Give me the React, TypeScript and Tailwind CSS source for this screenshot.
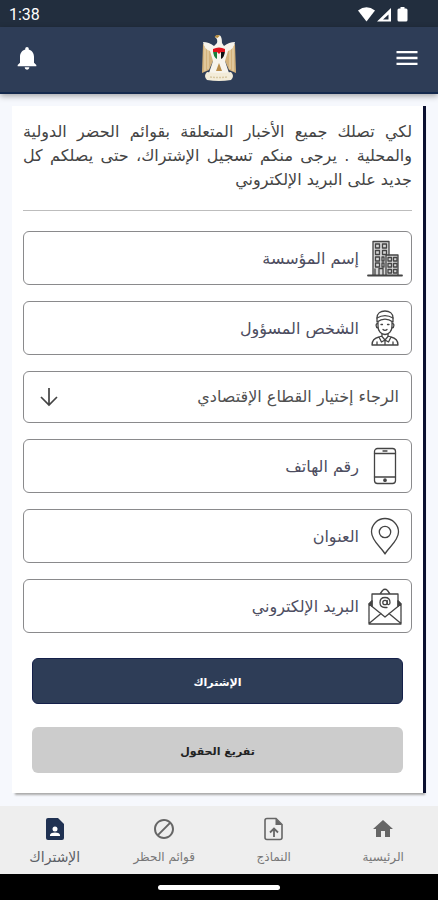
import type { ReactNode } from "react";
import { MdBlock, MdHome, MdMenu, MdNotifications } from "react-icons/md";

type FieldProps = { name: string; label: string; type?: string; icon: ReactNode };

const line = {
  fill: "none",
  stroke: "#444444",
  strokeWidth: 1.3,
  strokeLinecap: "round" as const,
  strokeLinejoin: "round" as const,
};

function BuildingIcon() {
  return (
    <svg width="36" height="38" viewBox="0 0 36 38" {...line} aria-hidden="true">
      <path d="M6 2.500H22V16H31V36H6Z" fill="#d6d6d6" stroke="none" />
      <path d="M1 36.500H35" strokeWidth="1.800" />
      <path d="M6 36V2.500H22V16M12 36V29.500H16V36" />
      <path d="M19 36V16H31V36" />
      <path d="M8.500 5H12.500V9H8.500ZM15.500 5H19.500V9H15.500ZM8.500 11.500H12.500V15.500H8.500ZM15.500 11.500H19.500V15.500H15.500ZM8.500 18H12.500V22H8.500ZM8.500 24H12.500V28H8.500ZM15 18H17V22H15ZM15 24H17V28H15ZM21 18.500H24.500V22H21ZM26.500 18.500H30V22H26.500ZM21 24.500H24.500V28H21ZM26.500 24.500H30V28H26.500ZM21 30.500H24.500V34H21ZM26.500 30.500H30V34H26.500ZM8 30V36" />
    </svg>
  );
}

function WorkerIcon() {
  return (
    <svg width="36" height="38" viewBox="0 0 36 38" {...line} aria-hidden="true">
      <path d="M10 13V9C10 4.500 13.500 2 18 2S26 4.500 26 9V13C21 9.500 15 9.500 10 13Z" />
      <path d="M10 9C15 6 21 6 26 9" />
      <path d="M11 13V17C11 22 14 25.500 18 25.500S25 22 25 17V13M11 14.500C8.500 14 8.500 18.500 11 19M25 14.500C27.500 14 27.500 18.500 25 19" />
      <path d="M14 15.500H15.500M20.500 15.500H22M16 20.500C17 21.500 19 21.500 20 20.500" />
      <path d="M15 25V27.500L18 31L21 27.500V25M15 27L12 28L14.500 33L18 31L21.500 33L24 28L21 27M12 28C7.500 29 5 31 5 36H31C31 31 28.500 29 24 28M10 33V36M26 33V36M18 31V36" />
    </svg>
  );
}

function PhoneIcon() {
  return (
    <svg width="36" height="38" viewBox="0 0 36 38" {...line} aria-hidden="true">
      <rect x="7.500" y="1.500" width="21" height="35" rx="3" />
      <path d="M7.500 6.500H28.500M7.500 30H28.500M16 4H20" />
      <circle cx="18" cy="33.200" r="1.200" fill="#444444" />
    </svg>
  );
}

function PinIcon() {
  return (
    <svg width="36" height="38" viewBox="0 0 36 38" {...line} aria-hidden="true">
      <path d="M18 37C15 31 4.500 24 4.500 15A13.500 13.500 0 0 1 31.500 15C31.500 24 21 31 18 37Z" />
      <circle cx="18" cy="15" r="5.700" />
    </svg>
  );
}

function MailIcon() {
  return (
    <svg width="36" height="38" viewBox="0 0 36 38" {...line} aria-hidden="true">
      <path d="M5 19V7H13L15.500 3.500Q18 1 20.500 3.500L23 7H31V19M13 7H23" />
      <path d="M5 14L2 17V37H34V17L31 14M2 17L18 30L34 17M2 36.500L14 26.500M34 36.500L22 26.500" />
      <path d="M2 17L5 14V19ZM34 17L31 14V19Z" fill="#444444" />
      <circle cx="18" cy="15.500" r="2.200" />
      <path d="M20.200 13.300V16.500C20.800 18.500 23 17.500 23 15.500C23 12.500 21 10.500 18 10.500S13 12.500 13 15.500S15 20.500 18 20.500H20" />
    </svg>
  );
}

function Emblem() {
  return (
    <svg width="36" height="48" viewBox="0 0 36 48" aria-hidden="true">
      <path d="M2 10L12 13V27L8 36L1 39ZM34 10L24 13V27L28 36L35 39Z" fill="#d3b27c" />
      <path d="M4 13V37M7 14V35M32 13V37M29 14V35" stroke="#eddcb8" strokeWidth="1" />
      <path d="M14 3Q16 0 19 1.500Q21 3 21 9L23 12Q28 8 34 8Q33 15 27 17L24 27L28 39H8L12 27L9 17Q3 15 2 8Q8 8 13 12L16 9Q17 5 14 3Z" fill="#f7f4ec" />
      <path d="M13.500 3Q15 0 19 1.500L16.500 4Z" fill="#b58b3c" />
      <path d="M12 15L16 17V25Q12 23 12 15Z" fill="#16803c" />
      <path d="M24 15L20 17V25Q24 23 24 15Z" fill="#111111" />
      <path d="M12 15Q18 12 24 15V18H20L18 20L16 18H12Z" fill="#e0131c" />
      <path d="M18 29L21 37H15Z" fill="#b98d4a" />
      <path d="M6 38Q18 40 30 38Q34 42 30 46Q18 48 6 46Q2 42 6 38Z" fill="#f3ecd9" />
      <path d="M9 43Q18 44 27 43" stroke="#d8c9a4" strokeWidth="1.500" strokeDasharray="2 1" fill="none" />
    </svg>
  );
}

function StatusIcons() {
  return (
    <svg width="54" height="18" viewBox="0 0 54 18" aria-hidden="true">
      <path d="M1 4.500Q9.500 -2 18 4.500L9.500 15.500Z" fill="#ffffff" />
      <path d="M34 2V15.500H20Z M31.500 8.500L26 13.500H31.500Z" fill="#ffffff" fillRule="evenodd" />
      <path d="M43.500 1H47.500V2.500H49Q50.500 2.500 50.500 4V14Q50.500 15.500 49 15.500H42Q40.500 15.500 40.500 14V4Q40.500 2.500 42 2.500H43.500Z" fill="#ffffff" />
    </svg>
  );
}

function FormsIcon() {
  return (
    <svg width="24" height="24" viewBox="0 0 24 24" aria-hidden="true">
      <path d="M5 1.500H14L20 7.500V20.500Q20 22.500 18 22.500H5Q3 22.500 3 20.500V3.500Q3 1.500 5 1.500Z" fill="none" stroke="#666666" strokeWidth="1.600" />
      <path d="M13.500 1.500V8H20Z" fill="#666666" />
      <path d="M12 20V12M8 15.500L12 11.500L16 15.500" fill="none" stroke="#666666" strokeWidth="1.800" />
    </svg>
  );
}

function SubscribeIcon() {
  return (
    <svg width="24" height="24" viewBox="0 0 24 24" aria-hidden="true">
      <path d="M5 1H15L21 7V21Q21 23 19 23H5Q3 23 3 21V3Q3 1 5 1Z" fill="#1f3152" />
      <circle cx="12" cy="12" r="2.500" fill="#ffffff" />
      <path d="M7 19V17.500Q8 15.500 12 15.500T17 17.500V19Z" fill="#ffffff" />
    </svg>
  );
}

function Field({ name, label, type = "text", icon }: FieldProps) {
  return (
    <div className="flex h-[54px] items-center gap-2 rounded-md border border-[#8a8a8c] px-2">
      <label htmlFor={name} aria-label={label} className="shrink-0">
        {icon}
      </label>
      <input
        id={name}
        name={name}
        type={type}
        dir="rtl"
        aria-label={label}
        placeholder={label}
        className="h-full min-w-0 flex-1 bg-transparent text-right text-base text-[#3c3c50] outline-none placeholder:text-[#4d4d60]"
      />
    </div>
  );
}

function Tab({ label, icon, active = false }: { label: string; icon: ReactNode; active?: boolean }) {
  return (
    <a
      href="#"
      aria-current={active ? "page" : undefined}
      className={`flex flex-1 flex-col items-center gap-1 pt-[11px] ${active ? "text-sm text-[#5c5f66]" : "text-xs text-[#777777]"}`}
    >
      {icon}
      <span className="leading-6">{label}</span>
    </a>
  );
}

export default function App() {
  return (
    <div dir="rtl" className="flex min-h-screen flex-col bg-[#f6f8fd] font-['DejaVu_Sans',sans-serif]">
      <div dir="ltr" className="flex h-[27px] items-center justify-between bg-[#222e3e] pt-[2px] pr-[27px] pl-[9px] text-white">
        <span className="font-[Roboto,sans-serif] text-base">1:38</span>
        <StatusIcons />
      </div>
      <header className="grid h-[67px] grid-cols-3 items-center border-b-2 border-[#14294d] bg-[#2e3d57] px-[17px] pb-[3px] text-white shadow-[0_2px_6px_rgba(0,0,0,0.35)]">
        <button type="button" aria-label="القائمة" className="justify-self-start">
          <MdMenu size={28} />
        </button>
        <span className="justify-self-center">
          <Emblem />
        </span>
        <button type="button" aria-label="الإشعارات" className="-ml-1 justify-self-end">
          <MdNotifications size={28} />
        </button>
      </header>

      <main className="flex-1 px-3 pt-3 pb-[13px]">
        <form
          className="border-r-[3px] border-[#0b1030] bg-white px-[11px] pt-[14px] pb-5 shadow-[1px_4px_2px_-2px_#aaaaaa]"
          onSubmit={(event) => event.preventDefault()}
        >
          <p className="text-justify text-base leading-6 text-[#444444]">
            لكي تصلك جميع الأخبار المتعلقة بقوائم الحضر الدولية والمحلية . يرجى منكم تسجيل الإشتراك، حتى يصلكم كل جديد على البريد الإلكتروني
          </p>
          <hr className="mt-[18px] mb-5 border-[#bdbdbd]" />
          <div className="flex flex-col gap-4">
            <Field name="organization" label="إسم المؤسسة" icon={<BuildingIcon />} />
            <Field name="contact" label="الشخص المسؤول" icon={<WorkerIcon />} />
            <div className="relative">
              <select
                name="sector"
                aria-label="القطاع الإقتصادي"
                className="h-[52px] w-full appearance-none rounded-md border border-[#8a8a8c] bg-transparent px-3 text-base text-[#505050]"
              >
                <option>الرجاء إختيار القطاع الإقتصادي</option>
              </select>
              <svg className="pointer-events-none absolute top-4 left-4" width="20" height="20" viewBox="0 0 20 20" aria-hidden="true">
                <path d="M10 1V18M2 10L10 18L18 10" fill="none" stroke="#444444" strokeWidth="1.700" />
              </svg>
            </div>
            <Field name="phone" type="tel" label="رقم الهاتف" icon={<PhoneIcon />} />
            <Field name="address" label="العنوان" icon={<PinIcon />} />
            <Field name="email" type="email" label="البريد الإلكتروني" icon={<MailIcon />} />
          </div>
          <div className="mt-[25px] flex flex-col gap-[23px] px-[9px]">
            <button type="submit" className="h-[46px] rounded-md border border-[#14204a] bg-[#2e3d57] pt-1 text-[11px] font-bold text-white">
              الإشتراك
            </button>
            <button type="reset" className="h-[46px] rounded-md bg-[#cccccc] pt-1 text-[11px] font-bold text-[#222222]">
              تفريغ الحقول
            </button>
          </div>
        </form>
      </main>

      <nav className="flex h-[68px] bg-[#eeeeee]">
        <Tab label="الرئيسية" icon={<MdHome size={24} color="#666666" />} />
        <Tab label="النماذج" icon={<FormsIcon />} />
        <Tab label="قوائم الحظر" icon={<MdBlock size={24} color="#666666" />} />
        <Tab label="الإشتراك" icon={<SubscribeIcon />} active />
      </nav>
      <div className="flex h-[26px] items-center justify-center bg-black">
        <span className="h-[5px] w-[122px] rounded-full bg-white" />
      </div>
    </div>
  );
}
